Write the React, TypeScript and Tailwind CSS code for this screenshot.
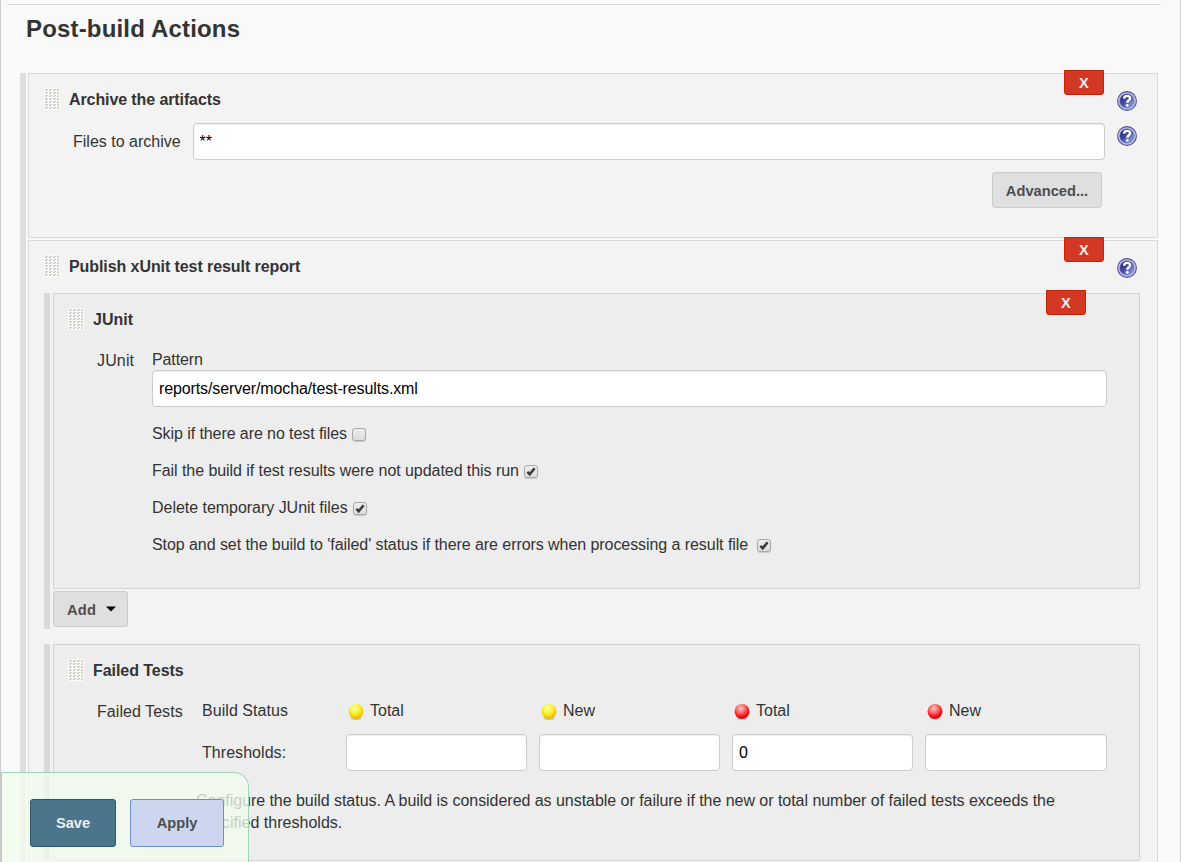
import type { ReactNode } from "react";

const gripRows = [1, 4, 7, 10, 13, 16, 19];
const gripCols = [1, 5, 9, 13];

function Grip() {
  return (
    <svg width="16" height="22" viewBox="0 0 16 22" className="block shrink-0" shapeRendering="crispEdges">
      <rect width="16" height="22" fill="#fafaf9" />
      {gripRows.map((y) =>
        gripCols.map((x) => (
          <g key={`${x}-${y}`}>
            <rect x={x} y={y} width="1" height="1" fill="#e6e6e3" />
            <rect x={x + 1} y={y} width="1" height="1" fill="#cfcfca" />
            <rect x={x} y={y + 1} width="2" height="1" fill="#cbcbc6" />
            {x < 13 && <rect x={x + 2} y={y} width="1" height="1" fill="#c9c9c5" />}
          </g>
        )),
      )}
    </svg>
  );
}

function Help() {
  return (
    <svg width="20" height="20" viewBox="0 0 20 20" className="block shrink-0">
      <defs>
        <linearGradient id="helpFill" x1="0" y1="0" x2="1" y2="1">
          <stop offset="0.1" stopColor="#25257f" />
          <stop offset="0.45" stopColor="#414b9f" />
          <stop offset="0.9" stopColor="#8fa6de" />
        </linearGradient>
      </defs>
      <circle cx="10" cy="10" r="9.4" fill="#c3cae6" stroke="#54509c" strokeWidth="1.1" />
      <circle cx="10" cy="10" r="7.3" fill="url(#helpFill)" stroke="#7f86c4" strokeWidth="0.6" />
      <path d="M7 7.6C7.1 5.7 8.4 4.9 10.1 4.9c1.8 0 3 .9 3 2.4 0 2-2.8 2-2.8 4.4" fill="none" stroke="#fff" strokeWidth="2.4" />
      <circle cx="10.2" cy="14.4" r="1.4" fill="#fff" />
    </svg>
  );
}

function Ball({ color }: { color: "yellow" | "red" }) {
  const id = `ball-${color}`;
  const stops = color === "yellow" ? ["#fcfcae", "#f7f73c", "#f9cb00", "#dcae10"] : ["#ffc4c4", "#fb6a6a", "#f20a12", "#c81020"];
  return (
    <svg width="20" height="20" viewBox="0 0 20 20" className="block shrink-0">
      <defs>
        <radialGradient id={id} cx="0.42" cy="0.3" r="0.75">
          <stop offset="0" stopColor={stops[0]} />
          <stop offset="0.4" stopColor={stops[1]} />
          <stop offset="0.75" stopColor={stops[2]} />
          <stop offset="1" stopColor={stops[3]} />
        </radialGradient>
      </defs>
      <ellipse cx="10" cy="16.2" rx="5.6" ry="1.7" fill="#000" opacity="0.16" />
      <circle cx="10" cy="9.4" r="7.5" fill={`url(#${id})`} />
    </svg>
  );
}

function Check({ checked = false }: { checked?: boolean }) {
  return (
    <span className="block h-[13px] w-[14px] shrink-0 rounded-[3px] border border-[#a8a8a8] bg-linear-to-b from-[#ededed] to-[#dcdcdc] shadow-[0_1px_1px_rgba(0,0,0,0.16)]">
      {checked && (
        <svg width="12" height="11" viewBox="0 0 12 11" className="block">
          <path d="M2.4 5.9 4.7 8.2 9.6 2.2" fill="none" stroke="#3c3c3c" strokeWidth="2.6" />
        </svg>
      )}
    </span>
  );
}

function Field({ value = "", className }: { value?: string; className: string }) {
  return (
    <input
      defaultValue={value}
      className={`${className} block h-[37px] min-w-0 rounded border border-[#ccc] bg-white px-1.5 text-[16px] tracking-[-0.12px] text-black shadow-[inset_0_1px_1px_rgba(0,0,0,0.075)] outline-none`}
    />
  );
}

function Remove({ className }: { className: string }) {
  return (
    <button
      className={`${className} absolute -top-1 h-[25px] w-10 rounded-b-[3px] border border-[#c72200] bg-[#d33824] pt-[2px] text-[14.67px] leading-[21px] font-bold text-[#eee]`}
    >
      X
    </button>
  );
}

function Title({ children, className = "" }: { children: ReactNode; className?: string }) {
  return (
    <div className="flex h-[22px] items-center gap-[9px]">
      <Grip />
      <b className={`${className} pt-[2px]`}>{children}</b>
    </div>
  );
}

const options = [
  { label: "Skip if there are no test files", checked: false, style: "gap-[5px] tracking-[-0.08px]" },
  { label: "Fail the build if test results were not updated this run", checked: true, style: "gap-[5px] tracking-[-0.055px]" },
  { label: "Delete temporary JUnit files", checked: true, style: "gap-[5px] tracking-[-0.03px]" },
  {
    label: "Stop and set the build to 'failed' status if there are errors when processing a result file",
    checked: true,
    style: "gap-[9px] tracking-[-0.065px]",
  },
];

const thresholds: { color: "yellow" | "red"; label: string; value: string }[] = [
  { color: "yellow", label: "Total", value: "" },
  { color: "yellow", label: "New", value: "" },
  { color: "red", label: "Total", value: "0" },
  { color: "red", label: "New", value: "" },
];

export default function App() {
  return (
    <div className="relative h-[862px] w-full overflow-hidden border-x border-[#ccc] bg-[#f9f9f9] font-['Liberation_Sans',Arial,sans-serif] text-[16px] leading-[22px] text-[#333]">
      <div className="mt-1 mr-[19px] ml-[6px] h-px bg-[#d9d9d9]" />
      <h2 className="mt-[9px] ml-[25px] h-[30px] text-[24px] leading-[30px] font-bold tracking-[0.17px]">Post-build Actions</h2>

      <main className="mt-[29px] mr-[22px] ml-[19px] flex flex-col gap-[2px] border-l-[6px] border-[#dedede] pl-[2px]">
        <section className="relative flex h-[165px] justify-between border border-[#d9d9d9] bg-[#f3f3f3] pr-5 pl-[15px]">
          <Remove className="right-[53px]" />
          <div className="w-[1061px] pt-[14px]">
            <Title className="tracking-[-0.1px]">Archive the artifacts</Title>
            <div className="mt-[13px] flex items-center gap-3 pl-[29px]">
              <label className="shrink-0">Files to archive</label>
              <Field value="**" className="flex-1" />
            </div>
            <div className="mt-3 flex justify-end pr-[3px]">
              <button className="h-9 w-[110px] rounded-[3px] border border-[#ccc] bg-[#dfdfdf] pt-[2px] text-[14.67px] font-bold text-[#4d4d4d]">
                Advanced...
              </button>
            </div>
          </div>
          <div className="flex flex-col gap-[15px] pt-[17px]">
            <Help />
            <Help />
          </div>
        </section>

        <section className="relative h-[700px] border border-[#d9d9d9] bg-[#f3f3f3] pr-[17px] pl-[15px]">
          <Remove className="right-[53px]" />
          <div className="flex h-[52px] justify-between pt-[14px] pr-[3px]">
            <Title className="tracking-[-0.08px]">Publish xUnit test result report</Title>
            <div className="pt-[3px]">
              <Help />
            </div>
          </div>

          <div className="h-[336px] border-l-[6px] border-[#d9d9d9] pl-[3px]">
            <div className="relative h-[296px] border border-[#d3d3d3] bg-[#ededed] pt-[14px] pl-[14px]">
              <Remove className="right-[53px]" />
              <Title>JUnit</Title>
              <div className="mt-[19px] flex pl-[29px]">
                <label className="w-[55px] pt-px tracking-[0.15px]">JUnit</label>
                <div className="w-[955px]">
                  <div className="tracking-[-0.1px]">Pattern</div>
                  <Field value="reports/server/mocha/test-results.xml" className="-mt-px w-full" />
                  <div className="mt-4 flex flex-col gap-[15px]">
                    {options.map((o) => (
                      <label key={o.label} className={`flex h-[22px] items-center ${o.style}`}>
                        {o.label}
                        <span className="pt-px">
                          <Check checked={o.checked} />
                        </span>
                      </label>
                    ))}
                  </div>
                </div>
              </div>
            </div>
            <button className="mt-[2px] flex h-9 w-[75px] items-center gap-[10px] rounded-[3px] border border-[#ccc] bg-[#dfdfdf] pl-[13px] text-[14.67px] font-bold text-[#4d4d4d]">
              <span className="pt-[2px] tracking-[0.25px]">Add</span>
              <svg width="10" height="6" viewBox="0 0 10 6" className="block">
                <path d="M0 .5h10L5 5.5z" fill="#000" />
              </svg>
            </button>
          </div>

          <div className="mt-[15px] border-l-[6px] border-[#d9d9d9] pl-[3px]">
            <div className="h-[217px] border border-[#d3d3d3] bg-[#ededed] pt-[14px] pl-[14px]">
              <Title className="tracking-[-0.05px]">Failed Tests</Title>
              <div className="mt-[19px] flex pl-[29px]">
                <label className="w-[105px] pt-px tracking-[0.05px]">Failed Tests</label>
                <div className="flex w-[144px] flex-col gap-5">
                  <div className="tracking-[0.05px]">Build Status</div>
                  <div className="tracking-[0.05px]">Thresholds:</div>
                </div>
                <div className="grid w-[761px] grid-cols-[181px_181px_181px_182px] gap-x-3">
                  {thresholds.map((t) => (
                    <div key={t.color + t.label}>
                      <div className="flex h-[22px] items-center gap-1">
                        <span className="pt-[2px]">
                          <Ball color={t.color} />
                        </span>
                        {t.label}
                      </div>
                      <Field value={t.value} className="mt-3 w-full" />
                    </div>
                  ))}
                </div>
              </div>
              <p className="mt-[19px] ml-[128px] w-[911px] tracking-[-0.038px]">
                Configure the build status. A build is considered as unstable or failure if the new or total number of failed tests exceeds the{" "}
                <span className="tracking-[0.02px]">specified thresholds.</span>
              </p>
            </div>
          </div>
        </section>
      </main>

      <div className="absolute bottom-0 left-0 flex h-[90px] w-[248px] gap-[14px] rounded-tr-[15px] border border-b-0 border-[#a1d3b8] bg-[rgba(241,252,236,0.77)] pt-[26px] pl-[28px]">
        <button className="h-12 w-[86px] rounded-[3px] border border-[#2f5468] bg-[#4b758b] text-[14.67px] font-bold text-[#eee]">Save</button>
        <button className="h-12 w-[94px] rounded-[3px] border border-[#6d8bd9] bg-[#ccd7ef] text-[14.67px] font-bold text-[#4d4d4d]">Apply</button>
      </div>
    </div>
  );
}
